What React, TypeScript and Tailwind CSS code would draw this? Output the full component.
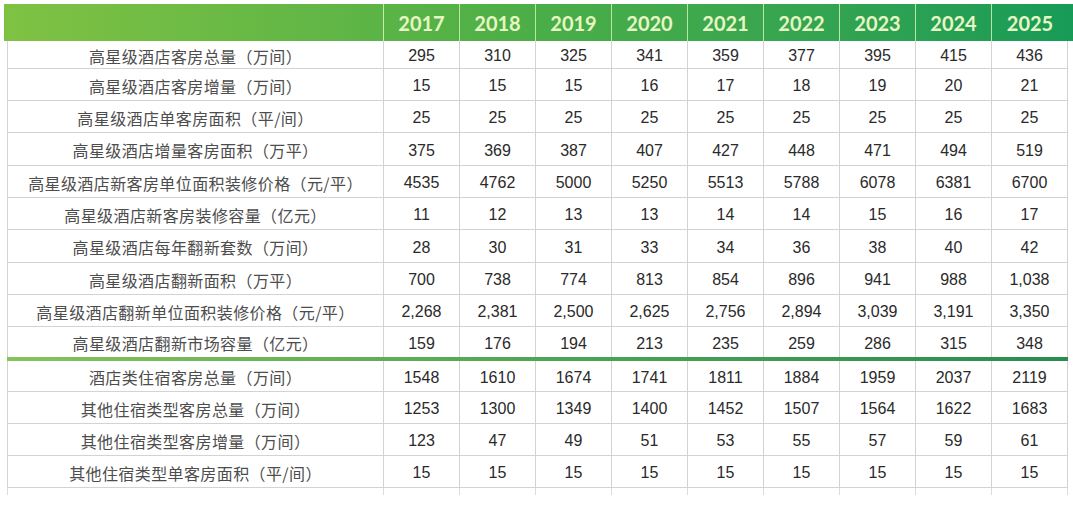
import React from "react";

const years = ["2017", "2018", "2019", "2020", "2021", "2022", "2023", "2024", "2025"];

type Row = { label: string; values: string[]; h: string };

const top: Row[] = [
  { label: "高星级酒店客房总量（万间）", values: ["295", "310", "325", "341", "359", "377", "395", "415", "436"], h: "h-[28px]" },
  { label: "高星级酒店客房增量（万间）", values: ["15", "15", "15", "16", "17", "18", "19", "20", "21"], h: "h-[32px]" },
  { label: "高星级酒店单客房面积（平/间）", values: ["25", "25", "25", "25", "25", "25", "25", "25", "25"], h: "h-[32px]" },
  { label: "高星级酒店增量客房面积（万平）", values: ["375", "369", "387", "407", "427", "448", "471", "494", "519"], h: "h-[33px]" },
  { label: "高星级酒店新客房单位面积装修价格（元/平）", values: ["4535", "4762", "5000", "5250", "5513", "5788", "6078", "6381", "6700"], h: "h-[32px]" },
  { label: "高星级酒店新客房装修容量（亿元）", values: ["11", "12", "13", "13", "14", "14", "15", "16", "17"], h: "h-[32px]" },
  { label: "高星级酒店每年翻新套数（万间）", values: ["28", "30", "31", "33", "34", "36", "38", "40", "42"], h: "h-[33px]" },
  { label: "高星级酒店翻新面积（万平）", values: ["700", "738", "774", "813", "854", "896", "941", "988", "1,038"], h: "h-[32px]" },
  { label: "高星级酒店翻新单位面积装修价格（元/平）", values: ["2,268", "2,381", "2,500", "2,625", "2,756", "2,894", "3,039", "3,191", "3,350"], h: "h-[32px]" },
  { label: "高星级酒店翻新市场容量（亿元）", values: ["159", "176", "194", "213", "235", "259", "286", "315", "348"], h: "h-[30px]" },
];

const bottom: Row[] = [
  { label: "酒店类住宿客房总量（万间）", values: ["1548", "1610", "1674", "1741", "1811", "1884", "1959", "2037", "2119"], h: "h-[31px]" },
  { label: "其他住宿类型客房总量（万间）", values: ["1253", "1300", "1349", "1400", "1452", "1507", "1564", "1622", "1683"], h: "h-[32px]" },
  { label: "其他住宿类型客房增量（万间）", values: ["123", "47", "49", "51", "53", "55", "57", "59", "61"], h: "h-[32px]" },
  { label: "其他住宿类型单客房面积（平/间）", values: ["15", "15", "15", "15", "15", "15", "15", "15", "15"], h: "h-[32px]" },
];

const labelFont = { fontFamily: '"Noto Sans CJK SC", "Noto Sans", sans-serif' };
const numFont = { fontFamily: '"Liberation Sans", Arial, sans-serif' };

function BodyRow({ row, last }: { row: Row; last?: boolean }) {
  return (
    <div className={`grid grid-cols-[380px_repeat(9,76px)] ${row.h}`}>
      <div
        className={`ml-[3px] flex items-center justify-center pt-[2px] border-l border-r border-[#d3d3d3] ${last ? "" : "border-b"} text-[16px] tracking-[0.4px] text-[#4d4d4d] leading-none whitespace-nowrap`}
        style={labelFont}
      >
        {row.label}
      </div>
      {row.values.map((v, i) => (
        <div
          key={i}
          className={`flex items-center justify-center pt-[3px] border-r border-[#d3d3d3] ${last ? "" : "border-b"} text-[16px] text-[#2a2a2a] leading-none`}
          style={numFont}
        >
          {v}
        </div>
      ))}
    </div>
  );
}

export default function App() {
  return (
    <div className="w-[1073px] h-[505px] bg-white pt-[4px] pl-[4px] overflow-hidden">
      <div className="grid grid-cols-[380px_repeat(9,76px)] h-[37px] bg-linear-to-r from-[#7fc243] via-[#4aae47] to-[#169b57]">
        <div className="border-r border-[#c6eaa8]" />
        {years.map((y, i) => (
          <div
            key={y}
            className={`flex items-center justify-center pt-[1px] ${i < 8 ? "border-r border-[#b9e6a4]" : ""} text-[20px] font-bold text-[#e6f7c4]`}
            style={{ fontFamily: 'Lato, "Open Sans", sans-serif' }}
          >
            {y}
          </div>
        ))}
      </div>

      {top.map((r, i) => (
        <BodyRow key={i} row={r} last={i === top.length - 1} />
      ))}

      <div className="ml-[3px] w-[1061px] h-[4px] bg-linear-to-r from-[#86c35c] via-[#4ea653] to-[#2a8c4f]" />

      {bottom.map((r, i) => (
        <BodyRow key={i} row={r} />
      ))}

      <div className="grid grid-cols-[380px_repeat(9,76px)] h-[7px]">
        <div className="ml-[3px] border-l border-r border-[#dcdcdc]" />
        {years.map((y) => (
          <div key={y} className="border-r border-[#dcdcdc]" />
        ))}
      </div>
    </div>
  );
}
